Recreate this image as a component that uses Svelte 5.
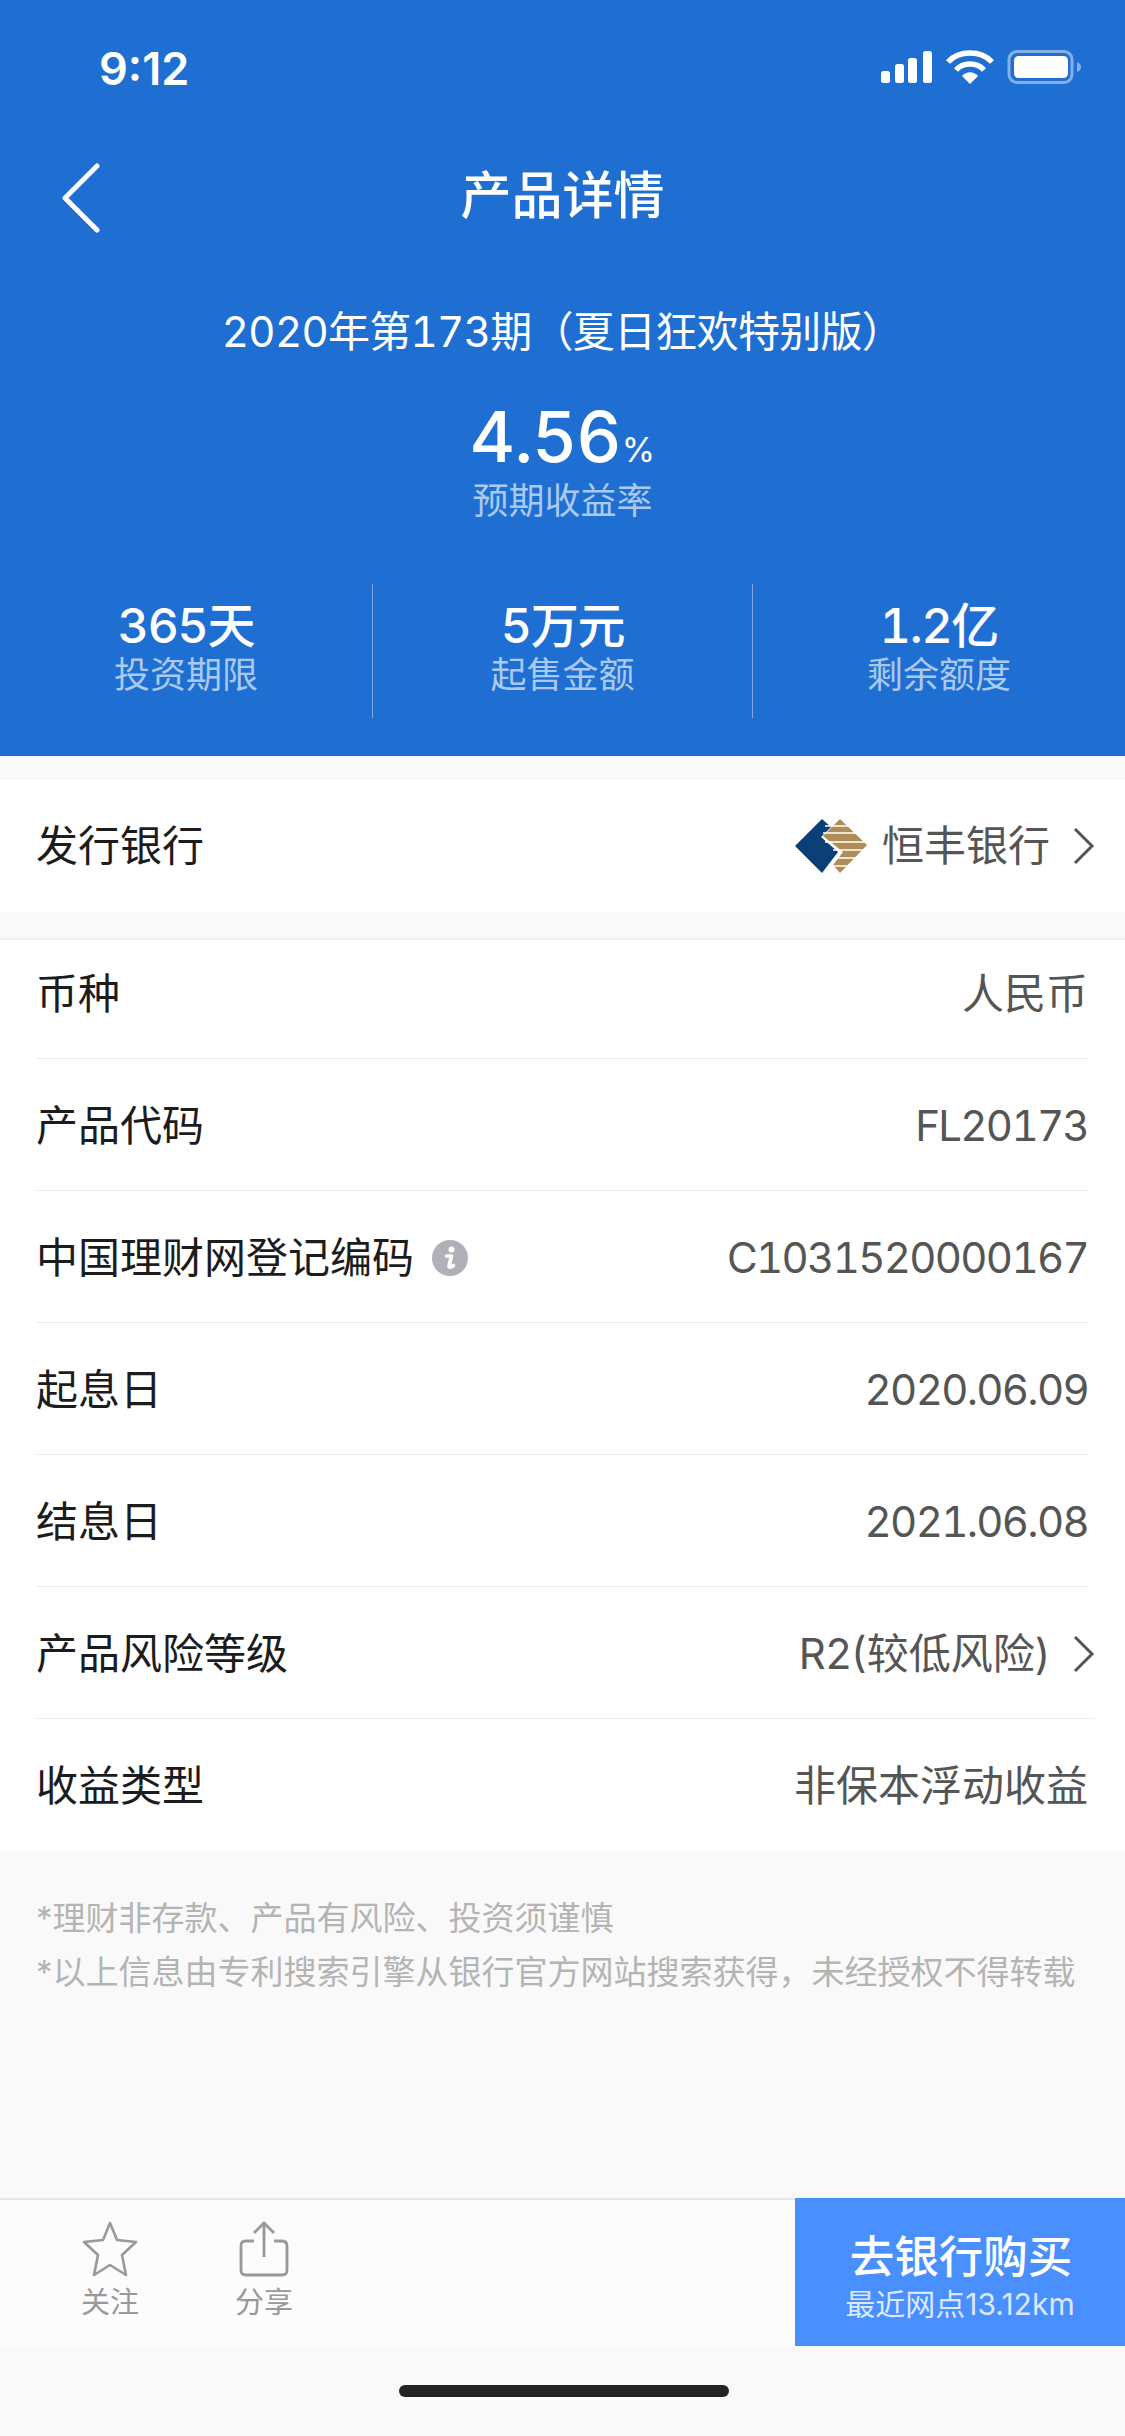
<script>
	let stats = [
		{ value: '365天', label: '投资期限' },
		{ value: '5万元', label: '起售金额' },
		{ value: '1.2亿', label: '剩余额度' }
	];
	let rows = [
		{ label: '币种', value: '人民币' },
		{ label: '产品代码', value: 'FL20173', latin: true },
		{ label: '中国理财网登记编码', value: 'C1031520000167', latin: true, info: true },
		{ label: '起息日', value: '2020.06.09', latin: true },
		{ label: '结息日', value: '2021.06.08', latin: true },
		{ label: '产品风险等级', value: 'R2(较低风险)', arrow: true },
		{ label: '收益类型', value: '非保本浮动收益' }
	];
</script>

<div class="page">
	<header class="hero">
		<div class="status">
			<span class="time">9:12</span>
			<svg class="status-icons" width="204" height="36" viewBox="0 0 204 36">
				<g fill="#fff">
					<rect x="4" y="21" width="9" height="12" rx="2.5" />
					<rect x="18" y="14" width="9" height="19" rx="2.5" />
					<rect x="31" y="8" width="9" height="25" rx="2.5" />
					<rect x="46" y="1" width="9" height="32" rx="2.5" />
				</g>
				<g fill="none" stroke="#fff" stroke-width="5.5">
					<path d="M71 12 C82 0 104 0 115 12" />
					<path d="M79 20 C86 12 100 12 107 20" />
				</g>
				<path d="M85 26 C90 21 96 21 101 26 L93 34 Z" fill="#fff" />
				<rect x="132" y="1.5" width="63" height="31" rx="8" fill="none" stroke="#fff" stroke-opacity="0.45" stroke-width="3" />
				<rect x="137" y="6" width="54" height="22" rx="4.5" fill="#fff" />
				<path d="M200 12 C203 13 204 15 204 17 C204 19 203 21 200 22 Z" fill="#fff" fill-opacity="0.45" />
			</svg>
		</div>
		<div class="nav">
			<svg class="back" width="40" height="70" viewBox="0 0 40 70">
				<path d="M35 3 L3 35 L35 67" fill="none" stroke="#fff" stroke-width="5" stroke-linecap="round" stroke-linejoin="round" />
			</svg>
			<h1>产品详情</h1>
		</div>
		<p class="subtitle">2020年第173期（夏日狂欢特别版）</p>
		<div class="rate"><span class="num">4.56</span><span class="pct">%</span></div>
		<p class="rate-label">预期收益率</p>
		<div class="stats">
			{#each stats as s}
				<div class="stat">
					<div class="stat-value">{s.value}</div>
					<div class="stat-label">{s.label}</div>
				</div>
			{/each}
		</div>
	</header>

	<section class="bank">
		<span class="label">发行银行</span>
		<div class="right">
			<svg class="logo" width="72" height="54" viewBox="0 0 72 54">
				<path d="M0 27 L27 0 L36 8 L26 18 L43 33 L27 54 Z" fill="#0b3f78" />
				<path d="M45 0 L72 26 L45 54 L38 46 L48 33 L28 17 Z" fill="#b08d57" />
				<g stroke="#fff" stroke-width="1.6">
					<path d="M30 7 H60 M28 14 H66 M30 23 H72 M38 31 H72 M40 39 H66 M36 47 H60" />
				</g>
			</svg>
			<span class="value">恒丰银行</span>
			<svg class="chev" width="22" height="38" viewBox="0 0 22 38">
				<path d="M2 2 L19 19 L2 36" fill="none" stroke="#555" stroke-width="3" />
			</svg>
		</div>
	</section>

	<section class="list">
		{#each rows as r}
			<div class="row">
				<span class="label">{r.label}</span>
				{#if r.info}
					<svg class="info" width="36" height="36" viewBox="0 0 36 36">
						<circle cx="18" cy="18" r="18" fill="#b0b1b8" />
						<circle cx="19.5" cy="9.5" r="3" fill="#fff" />
						<path d="M14.5 16 H19.5 L17 26 C16.7 27.5 18.5 27.8 21.5 25.5" fill="none" stroke="#fff" stroke-width="3.6" stroke-linecap="round" stroke-linejoin="round" />
					</svg>
				{/if}
				<div class="right">
					<span class="value" class:latin={r.latin}>{r.value}</span>
					{#if r.arrow}
						<svg class="chev" width="22" height="38" viewBox="0 0 22 38">
							<path d="M2 2 L19 19 L2 36" fill="none" stroke="#555" stroke-width="3" />
						</svg>
					{/if}
				</div>
			</div>
		{/each}
	</section>

	<footer class="notes">
		<p>*理财非存款、产品有风险、投资须谨慎</p>
		<p>*以上信息由专利搜索引擎从银行官方网站搜索获得，未经授权不得转载</p>
	</footer>

	<div class="bar">
		<div class="tool">
			<svg width="56" height="56" viewBox="0 0 56 56">
				<path d="M28 2 L35 19 L54 21 L40 34 L44 54 L28 44 L12 54 L16 34 L2 21 L21 19 Z" fill="none" stroke="#999" stroke-width="2.6" stroke-linejoin="round" />
			</svg>
			<span>关注</span>
		</div>
		<div class="tool">
			<svg width="56" height="56" viewBox="0 0 56 56">
				<path d="M18 20 H10 Q5 20 5 25 V49 Q5 54 10 54 H46 Q51 54 51 49 V25 Q51 20 46 20 H38" fill="none" stroke="#999" stroke-width="2.8" />
				<path d="M28 36 V2 M18 12 L28 2 L38 12" fill="none" stroke="#999" stroke-width="2.8" />
			</svg>
			<span>分享</span>
		</div>
		<button class="buy">
			<span class="buy-main">去银行购买</span>
			<span class="buy-sub">最近网点13.12km</span>
		</button>
	</div>

	<div class="home"><i></i></div>
</div>

<style>
	:global(body) {
		margin: 0;
		background: #f9f9f9;
	}
	.page {
		width: 1125px;
		height: 2436px;
		display: flex;
		flex-direction: column;
		background: #f9f9f9;
		font-family: Inter, 'Noto Sans CJK SC', sans-serif;
		overflow: hidden;
	}
	.hero {
		height: 756px;
		background: #1f6fd3;
		color: #fff;
		text-align: center;
		display: flex;
		flex-direction: column;
		flex-shrink: 0;
	}
	.status {
		height: 136px;
		display: flex;
		justify-content: space-between;
		align-items: center;
		padding: 0 44px 0 99px;
		flex-shrink: 0;
	}
	.time {
		font-size: 45px;
		font-weight: 600;
	}
	.nav {
		height: 118px;
		display: flex;
		align-items: center;
		justify-content: center;
		position: relative;
		flex-shrink: 0;
	}
	.back {
		position: absolute;
		left: 62px;
		top: 27px;
	}
	h1 {
		margin: 0;
		font-size: 51px;
		font-weight: 500;
		line-height: 1;
	}
	.subtitle {
		margin: 46px 0 0;
		font-size: 42px;
		line-height: 64px;
		font-variant-numeric: tabular-nums;
		letter-spacing: -0.7px;
	}
	.rate {
		margin-top: 35px;
		height: 76px;
		line-height: 76px;
		font-weight: 500;
		font-variant-numeric: tabular-nums;
	}
	.num {
		font-size: 70px;
		letter-spacing: -1px;
	}
	.pct {
		font-size: 34px;
		font-weight: 400;
		margin-left: 1px;
	}
	.rate-label {
		margin: 2px 0 0;
		font-size: 36px;
		line-height: 48px;
		color: #a9c9f0;
	}
	.stats {
		margin-top: 59px;
		display: grid;
		grid-template-columns: 372px 380px 373px;
		height: 134px;
	}
	.stat {
		display: flex;
		flex-direction: column;
		align-items: center;
		justify-content: center;
		border-left: 1px solid #7fa9e2;
		padding-bottom: 12px;
		box-sizing: border-box;
	}
	.stat:first-child {
		border-left: none;
	}
	.stat-value {
		font-size: 48px;
		font-weight: 500;
		line-height: 60px;
		font-variant-numeric: tabular-nums;
		letter-spacing: -1.2px;
	}
	.stat-label {
		font-size: 36px;
		line-height: 38px;
		color: #a9c9f0;
	}
	.bank {
		margin-top: 24px;
		height: 132px;
		background: #fff;
		display: flex;
		align-items: center;
		justify-content: space-between;
		padding: 0 30px 0 36px;
		flex-shrink: 0;
	}
	.label {
		font-size: 42px;
		color: #1c1c1c;
		line-height: 1.2;
	}
	.value {
		font-size: 42px;
		color: #555;
		line-height: 1.2;
	}
	.latin {
		font-variant-numeric: tabular-nums;
		letter-spacing: -1.7px;
	}
	.right {
		display: flex;
		align-items: center;
		margin-left: auto;
	}
	.logo {
		margin-right: 15px;
	}
	.chev {
		margin-left: 23px;
	}
	.list {
		margin-top: 26px;
		background: #fff;
		border-top: 2px solid #f0f0f0;
		padding: 0 37px 0 36px;
		flex-shrink: 0;
	}
	.row {
		height: 132px;
		box-sizing: border-box;
		padding-top: 3px;
		display: flex;
		align-items: center;
		border-bottom: 1px solid #ececec;
	}
	.row:first-child {
		height: 119px;
		padding-top: 0;
		padding-bottom: 9px;
	}
	.row:last-child {
		border-bottom: none;
	}
	.row:has(.chev) {
		margin-right: -7px;
	}
	.info {
		margin-left: 18px;
	}
	.notes {
		padding: 40px 37px 0 36px;
		flex: 1;
		color: #b4b4b4;
		font-size: 33px;
	}
	.notes p {
		margin: 0;
		line-height: 54px;
		white-space: nowrap;
	}
	.bar {
		height: 146px;
		background: #fcfcfc;
		border-top: 2px solid #e6e6e6;
		display: flex;
		position: relative;
		flex-shrink: 0;
	}
	.tool {
		width: 154px;
		display: flex;
		flex-direction: column;
		align-items: center;
		padding-top: 21px;
		color: #999;
		font-size: 29px;
		line-height: 40px;
	}
	.tool:first-child {
		margin-left: 33px;
	}
	.tool svg {
		margin-bottom: 6px;
	}
	.buy {
		position: absolute;
		right: 0;
		top: -2px;
		bottom: 0;
		width: 330px;
		border: none;
		padding: 8px 0 0;
		background: #4a8ffe;
		color: #fff;
		font-family: inherit;
		display: flex;
		flex-direction: column;
		align-items: center;
		justify-content: center;
	}
	.buy-main {
		font-size: 44.5px;
		font-weight: 500;
		line-height: 56px;
		margin-left: 2px;
	}
	.buy-sub {
		font-size: 30px;
		line-height: 38px;
		color: #dbe8ff;
	}
	.home {
		height: 90px;
		display: flex;
		justify-content: center;
		padding: 39px 0 0 3px;
		box-sizing: border-box;
		flex-shrink: 0;
	}
	.home i {
		display: block;
		width: 330px;
		height: 12px;
		border-radius: 6px;
		background: #232326;
	}
</style>
